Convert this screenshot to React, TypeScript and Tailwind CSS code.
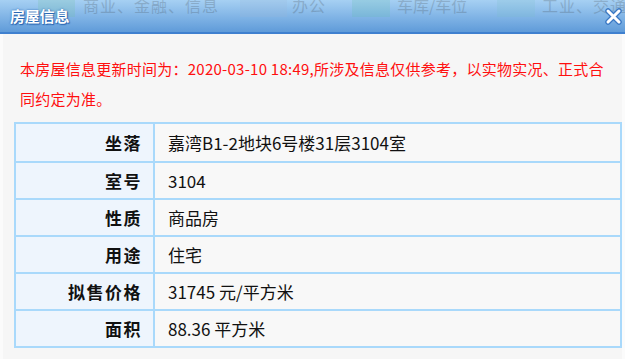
import React from "react";

const rows: [string, string][] = [
  ["坐落", "嘉湾B1-2地块6号楼31层3104室"],
  ["室号", "3104"],
  ["性质", "商品房"],
  ["用途", "住宅"],
  ["拟售价格", "31745 元/平方米"],
  ["面积", "88.36 平方米"],
];

export default function App() {
  return (
    <div
      className="w-[625px] h-[359px] overflow-hidden bg-[#f6f6f6] flex flex-col"
      style={{ fontFamily: '"Noto Sans CJK SC", "Noto Sans", sans-serif' }}
    >
      <div className="relative h-[34px] shrink-0 overflow-hidden bg-gradient-to-b from-[#a6d0f3] to-[#5f9bd9] border-b-2 border-[#3f80cf]">
        <div className="absolute inset-x-0 top-0 flex items-start opacity-20 text-[16px] leading-[17px] text-[#333] whitespace-nowrap tracking-[1px]">
          <div className="ml-[38px] w-[37px] h-[17px] shrink-0 bg-[#6fc09a]" />
          <div className="ml-[8px] w-[157px] shrink-0 -mt-[3px]">商业、金融、信息</div>
          <div className="w-[47px] h-[17px] shrink-0 bg-[#9ab7d8]" />
          <div className="ml-[5px] w-[60px] shrink-0 -mt-[3px]">办公</div>
          <div className="w-[38px] h-[17px] shrink-0 bg-[#5fc0a8]" />
          <div className="ml-[7px] w-[100px] shrink-0 -mt-[3px] tracking-[0px]">车库/车位</div>
          <div className="w-[38px] h-[17px] shrink-0 bg-[#7cc0c8]" />
          <div className="ml-[7px] shrink-0 -mt-[3px]">工业、交通</div>
        </div>
        <div className="relative flex items-center justify-between h-full pl-[10px] pr-[3px]">
          <span
            className="text-white font-bold text-[15px] tracking-[-0.2px]"
            style={{ textShadow: "0 0 2px #1f5fb0, 1px 1px 1px #2a66b0" }}
          >
            房屋信息
          </span>
          <svg width="17" height="17" viewBox="0 0 17 17">
            <path d="M3 3 L14 14 M14 3 L3 14" stroke="#3a78c4" strokeWidth="5.5" strokeLinecap="round" />
            <path d="M3 3 L14 14 M14 3 L3 14" stroke="#ffffff" strokeWidth="3" strokeLinecap="round" />
          </svg>
        </div>
      </div>
      <div className="flex-1 border-l-[3px] border-l-[#fbfbfb] border-r-[3px] border-r-[#fbfbfb] pl-[11px]">
        <div className="text-[15px] leading-[30px] text-[#ff0f0f] pt-[20px] pl-[6px] whitespace-nowrap tracking-[0.25px]">
          本房屋信息更新时间为：2020-03-10 18:49,所涉及信息仅供参考，以实物实况、正式合
          <br />
          同约定为准。
        </div>
        <div className="mt-[8px] w-[608px] border-2 border-[#a9d9fb]">
          {rows.map(([k, v], i) => (
            <div
              key={k}
              className={`flex h-[37px] ${i > 0 ? "border-t-2 border-[#a9d9fb]" : ""}`}
            >
              <div className="w-[139px] shrink-0 bg-[#eef5fd] border-r-2 border-[#a9d9fb] flex items-center justify-end pr-[11px] font-bold text-[17px] text-[#111] tracking-[1.5px]">
                {k}
              </div>
              <div className="flex-1 bg-[#f8f8f8] flex items-center pl-[13px] text-[17px] text-[#111]">
                {v}
              </div>
            </div>
          ))}
        </div>
      </div>
    </div>
  );
}
